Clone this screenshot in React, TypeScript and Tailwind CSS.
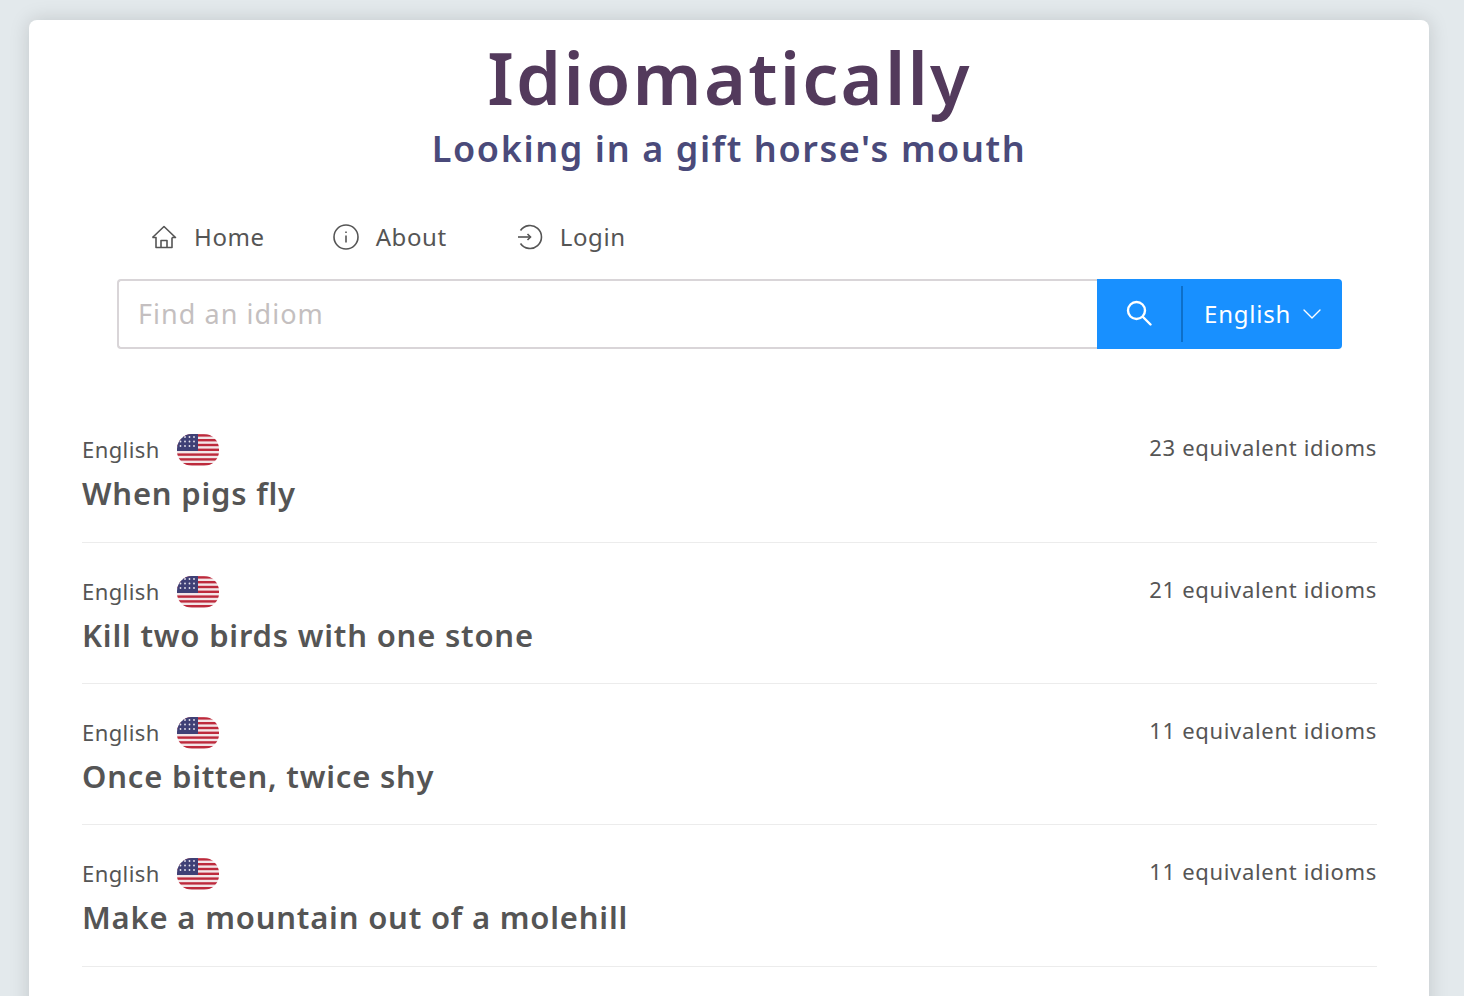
import { ChevronDown } from "lucide-react";

type Idiom = {
  title: string;
  count: number;
};

const idioms: Idiom[] = [
  { title: "When pigs fly", count: 23 },
  { title: "Kill two birds with one stone", count: 21 },
  { title: "Once bitten, twice shy", count: 11 },
  { title: "Make a mountain out of a molehill", count: 11 },
];

function HomeIcon() {
  return (
    <svg width="26" height="26" viewBox="0 0 26 26" fill="none" stroke="#555" strokeWidth="1.6" strokeLinejoin="round">
      <path d="M1.500 13.500 13 2.500l11.500 11H21" />
      <path d="M1.500 13.500H5v10h16v-10" />
      <path d="M10 23.500v-7h6v7" />
    </svg>
  );
}

function InfoIcon() {
  return (
    <svg width="26" height="26" viewBox="0 0 26 26" fill="none" stroke="#555" strokeWidth="1.6">
      <circle cx="13" cy="13" r="12" />
      <path d="M13 11.500v7" />
      <path d="M13 7.500v1.500" />
    </svg>
  );
}

function LoginIcon() {
  return (
    <svg width="26" height="26" viewBox="0 0 26 26" fill="none" stroke="#555" strokeWidth="1.6">
      <path d="M3.500 6.500a11.500 11.500 0 1 1 0 13" />
      <path d="M1 13h12.500" />
      <path d="m10.500 10 3 3-3 3" />
    </svg>
  );
}

function SearchGlyph() {
  return (
    <svg width="26" height="26" viewBox="0 0 26 26" fill="none" stroke="white" strokeWidth="2.4" strokeLinecap="round">
      <circle cx="10.500" cy="10.500" r="8.500" />
      <path d="m17 17 7.500 7.500" />
    </svg>
  );
}

function UsFlag() {
  const stripes = [0, 1, 2, 3, 4, 5, 6];
  return (
    <svg width="42" height="32" viewBox="0 0 42 32" className="shrink-0">
      <defs>
        <clipPath id="flag-clip">
          <rect x="0" y="0" width="42" height="32" rx="15" ry="15" />
        </clipPath>
      </defs>
      <g clipPath="url(#flag-clip)">
        <rect width="42" height="32" fill="#f3e6e8" />
        {stripes.map((i) => (
          <rect key={i} x="0" y={i * 4.8 + 0.2} width="42" height="2.400" fill="#bd2a3c" />
        ))}
        <rect width="21" height="17" fill="#3f4076" />
        {[3, 7.500, 12].map((y) =>
          [3.500, 8, 12.500, 17].map((x) => (
            <circle key={`${x}-${y}`} cx={x} cy={y} r="0.900" fill="#e8e4ee" />
          )),
        )}
      </g>
    </svg>
  );
}

export default function App() {
  return (
    <div className="h-[996px] overflow-hidden bg-[#e3e9ec] pl-[29px] pr-[35px] pt-5 font-['Noto_Sans',sans-serif] text-[#555]">
      <div className="h-[1200px] rounded-lg bg-white pl-[53px] pr-[52px] shadow-[0_0_20px_rgba(0,0,0,0.15)]">
        <h1 className="pt-[13px] text-center text-[72px] font-semibold leading-[88px] tracking-[2.2px] text-[#533a5c]">Idiomatically</h1>
        <h2 className="mt-[3px] pr-px text-center text-[36px] font-semibold leading-[50px] tracking-[1.6px] text-[#4a4a7a]">Looking in a gift horse's mouth</h2>

        <nav className="ml-[69px] mt-[38px] flex h-[50px] items-center gap-[68px] text-[24px] tracking-[0.6px]">
          <a className="flex items-center gap-[17px]"><HomeIcon />Home</a>
          <a className="flex items-center gap-[17px]"><InfoIcon />About</a>
          <a className="ml-[2px] flex items-center gap-[17px]"><LoginIcon />Login</a>
        </nav>

        <div className="ml-[35px] mt-[17px] flex h-[70px] w-[1225px]">
          <div className="flex flex-1 items-center rounded-l border-2 border-r-0 border-[#d9d5d8] pl-[19px] text-[27px] tracking-[1.05px] text-[#c4bfc0]">Find an idiom</div>
          <div className="flex w-[245px] items-center rounded-r bg-[#1890ff] text-white">
            <div className="flex w-[84px] items-center justify-center pb-[2px]"><SearchGlyph /></div>
            <div className="h-[56px] w-[2px] bg-[#0d6fc9]" />
            <div className="flex flex-1 items-center gap-[5px] pl-[21px] text-[24px] tracking-[0.8px]">English<ChevronDown size={32} strokeWidth={1} /></div>
          </div>
        </div>

        <div className="mt-[52px]">
          {idioms.map((idiom) => (
            <div key={idiom.title} className="h-[141px] border-b border-[#ececec] pt-8 first:h-[142px] last:h-[142px]">
              <div className="flex items-start justify-between">
                <div className="flex items-center gap-[17px] text-[22px] tracking-[0.4px]">English<UsFlag /></div>
                <div className="text-[22px] leading-[29px] tracking-[0.67px]">{idiom.count} equivalent idioms</div>
              </div>
              <div className="mt-[5px] text-[31px] font-semibold leading-[44px] tracking-[0.8px]">{idiom.title}</div>
            </div>
          ))}
        </div>
      </div>
    </div>
  );
}
